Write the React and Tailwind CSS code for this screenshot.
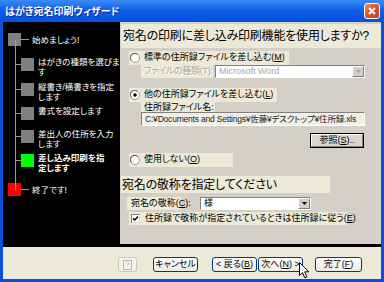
import React from 'react';

const Radio = ({ checked }) => (
  <svg width="10" height="10" viewBox="0 0 10 10" className="shrink-0">
    <circle cx="5" cy="5" r="4.5" fill="#fff" stroke="#9a9890" />
    <path d="M1.5 7.5A4.2 4.2 0 0 1 7.5 1.5" fill="none" stroke="#404040" strokeWidth="0.8" />
    {checked && <circle cx="5" cy="5" r="1.8" fill="#000" />}
  </svg>
);

const Combo = ({ value, disabled, className }) => (
  <div
    className={`flex h-[13px] border border-t-[#808080] border-l-[#808080] border-b-white border-r-white bg-white ${className}`}
  >
    <div className={`flex-1 pl-[3px] text-[9px] leading-[11px] whitespace-nowrap ${disabled ? 'text-[#a7a6aa]' : 'text-black'}`}>
      {value}
    </div>
    <div className="w-[12px] h-full bg-[#d4d0c8] border border-t-white border-l-white border-b-[#808080] border-r-[#808080] flex items-center justify-center">
      <svg width="5" height="3" viewBox="0 0 5 3">
        <path d="M0 0h5L2.5 3z" fill={disabled ? '#a7a6aa' : '#000'} />
      </svg>
    </div>
  </div>
);

const Btn = ({ children, className }) => (
  <div
    className={`h-[15px] rounded-[3px] border border-[#003c74] bg-linear-to-b from-white to-[#eceae2] flex items-center justify-center text-[9px] leading-none text-black whitespace-nowrap ${className}`}
  >
    {children}
  </div>
);

function Step({ lines, sq = 'bg-[#808080]', bold = false, outer = false, className = '' }) {
  if (outer) {
    return (
      <div className={`flex items-center ${className}`}>
        <div className={`ml-[5px] w-[13px] h-[13px] ${sq}`} />
        <div className="w-[8px] h-px bg-[#9a9a9a]" />
        <div className="ml-[3px] text-[8.5px] leading-[10px] whitespace-nowrap">{lines[0]}</div>
      </div>
    );
  }
  return (
    <div className={`flex items-start ${className}`}>
      <div className="flex items-center ml-[13px] mt-[1px]">
        <div className="w-[5px] h-px bg-[#9a9a9a]" />
        <div className={`w-[13px] h-[13px] ${sq}`} />
      </div>
      <div className={`ml-[4px] text-[8.5px] leading-[10px] whitespace-nowrap ${bold ? 'font-bold' : ''}`}>
        {lines.map((l) => (
          <div key={l} className="h-[10px]">{l}</div>
        ))}
      </div>
    </div>
  );
}

export default function App() {
  return (
    <div className="w-[384px] h-[282px] overflow-hidden relative flex flex-col bg-[#0a4fd8] font-['Liberation_Sans','Noto_Sans_CJK_JP',sans-serif] [font-feature-settings:'palt'] [font-variant-east-asian:proportional-width]">
      {/* Title bar */}
      <div className="h-[22px] shrink-0 flex items-center bg-linear-to-b from-[#3a8cf6] via-[#0a5ce8] to-[#0552dc]">
        <div className="pl-[5px] text-[10px] font-bold text-white [text-shadow:1px_1px_#0b2a9a] whitespace-nowrap">
          はがき宛名印刷ウィザード
        </div>
        <div className="ml-auto mr-[4px] w-[16px] h-[16px] rounded-[3px] border border-white bg-linear-to-br from-[#f08a6a] via-[#e0502c] to-[#c8401c] flex items-center justify-center">
          <svg width="8" height="8" viewBox="0 0 8 8">
            <path d="M1 1L7 7M7 1L1 7" stroke="#fff" strokeWidth="1.8" />
          </svg>
        </div>
      </div>

      {/* Body */}
      <div className="flex-1 flex flex-col border-x-[3px] border-b-[3px] border-[#0a4fd8]">
        <div className="h-[225px] shrink-0 flex bg-black pb-[3px]">
          {/* Steps */}
          <div className="w-[117px] relative flex flex-col text-white">
            <div className="absolute left-[12px] top-[18px] h-[150px] w-px bg-[#9a9a9a]" />
            <Step outer lines={['始めましょう!']} className="mt-[11px]" />
            <Step lines={['はがきの種類を選びま', 'す']} className="mt-[11px]" />
            <Step lines={['縦書き/横書きを指定', 'します']} className="mt-[5px]" />
            <Step lines={['書式を設定します']} className="mt-[4px]" />
            <Step lines={['差出人の住所を入力', 'します']} className="mt-[9px]" />
            <Step lines={['差し込み印刷を指', '定します']} sq="bg-[#00ff00]" bold className="mt-[4px]" />
            <Step outer lines={['終了です!']} sq="bg-[#ff0000]" className="mt-[10px]" />
          </div>

          {/* Content */}
          <div className="w-[261px] bg-[#d4d0c8] flex flex-col text-black">
            <div className="mt-[2px] ml-[1px] h-[24px] w-[260px] bg-[#ece9d8] flex items-center pl-[2px] text-[12px] tracking-[-0.2px] whitespace-nowrap">
              宛名の印刷に差し込み印刷機能を使用しますか?
            </div>

            <div className="mt-[3px] ml-[9px] h-[14px] w-[160px] bg-[#ece9d8] flex items-center pl-[1px] gap-[4px] text-[9px] whitespace-nowrap">
              <Radio />
              <span>
                標準の住所録ファイルを差し込む(<span className="underline">M</span>)
              </span>
            </div>

            <div className="h-[13px] flex">
              <div className="ml-[21px] w-[72px] bg-[#ece9d8] pl-[3px] text-[9px] tracking-[-0.3px] leading-[13px] text-[#aca899] [text-shadow:1px_1px_#fff] whitespace-nowrap">
                ファイルの種類(T):
              </div>
              <Combo value="Microsoft Word" disabled className="ml-[2px] w-[150px]" />
            </div>

            <div className="mt-[10px] ml-[9px] h-[14px] w-[148px] bg-[#ece9d8] flex items-center pl-[1px] gap-[4px] text-[9px] whitespace-nowrap">
              <Radio checked />
              <span>
                他の住所録ファイルを差し込む(<span className="underline">L</span>)
              </span>
            </div>

            <div className="ml-[21px] h-[10px] w-[74px] bg-[#ece9d8] pl-[3px] text-[9px] leading-[10px] whitespace-nowrap">
              住所録ファイル名:
            </div>

            <div className="ml-[21px] h-[14px] w-[224px] bg-[#f1efe6] border border-t-[#808080] border-l-[#808080] border-b-white border-r-white pl-[3px] text-[8.5px] tracking-[-0.2px] leading-[12px] text-[#222] whitespace-nowrap overflow-hidden">
              C:¥Documents and Settings¥佐藤¥デスクトップ¥住所録.xls
            </div>

            <div className="mt-[7px] ml-[190px] w-[54px] h-[15px] border border-black">
              <div className="h-full border border-t-white border-l-white border-b-[#808080] border-r-[#808080] bg-[#d8d5cc] flex items-center justify-center text-[9px] leading-none whitespace-nowrap">
                参照(<span className="underline">S</span>)..
              </div>
            </div>

            <div className="mt-[5px] ml-[9px] h-[14px] w-[104px] bg-[#ece9d8] flex items-center pl-[1px] gap-[4px] text-[9px] whitespace-nowrap">
              <Radio />
              <span>
                使用しない(<span className="underline">O</span>)
              </span>
            </div>

            <div className="mt-[9px] ml-[1px] h-[17px] w-[209px] bg-[#ece9d8] flex items-center pl-[1px] text-[12px] tracking-[-0.2px] whitespace-nowrap">
              宛名の敬称を指定してください
            </div>

            <div className="mt-[4px] h-[13px] flex">
              <div className="ml-[7px] w-[54px] bg-[#ece9d8] pl-[4px] text-[9px] leading-[13px] whitespace-nowrap">
                宛名の敬称(<span className="underline">C</span>):
              </div>
              <Combo value="様" className="ml-[19px] w-[111px]" />
            </div>

            <div className="mt-[2px] ml-[9px] h-[13px] w-[218px] bg-[#ece9d8] flex items-center pl-[2px] gap-[5px] text-[9px] whitespace-nowrap">
              <div className="w-[9px] h-[9px] bg-white border border-t-[#808080] border-l-[#808080] border-b-[#e0ded6] border-r-[#e0ded6] flex items-center justify-center">
                <svg width="7" height="7" viewBox="0 0 7 7">
                  <path d="M1 3.2L2.8 5L6 1.5" fill="none" stroke="#000" strokeWidth="1.4" />
                </svg>
              </div>
              <span>
                住所録で敬称が指定されているときは住所録に従う(<span className="underline">E</span>)
              </span>
            </div>
          </div>
        </div>

        {/* Buttons */}
        <div className="flex-1 bg-[#ece9d8] flex items-start pt-[10px]">
          <div className="ml-[115px] w-[19px] h-[15px] rounded-[3px] border border-[#c9c7ba] bg-[#f4f3ee] flex items-center justify-center">
            <div className="w-[9px] h-[10px] border border-[#b8b6a8] text-[7px] leading-[8px] text-[#aca899] text-center">?</div>
          </div>
          <Btn className="ml-[16px] w-[45px]">キャンセル</Btn>
          <Btn className="ml-[14px] w-[45px]">
            &lt; 戻る(<span className="underline">B</span>)
          </Btn>
          <Btn className="ml-[1px] w-[45px]">
            次へ(<span className="underline">N</span>) &gt;
          </Btn>
          <Btn className="ml-[12px] w-[47px]">
            完了(<span className="underline">F</span>)
          </Btn>
        </div>
      </div>

      {/* Mouse cursor */}
      <svg className="absolute left-[299px] top-[262px]" width="11" height="18" viewBox="0 0 11 18">
        <path d="M0.5 0.5V13.5L3.6 10.6L5.8 15.8L7.9 14.9L5.7 9.8H9.9Z" fill="#fff" stroke="#000" strokeWidth="1" strokeLinejoin="round" />
      </svg>
    </div>
  );
}
